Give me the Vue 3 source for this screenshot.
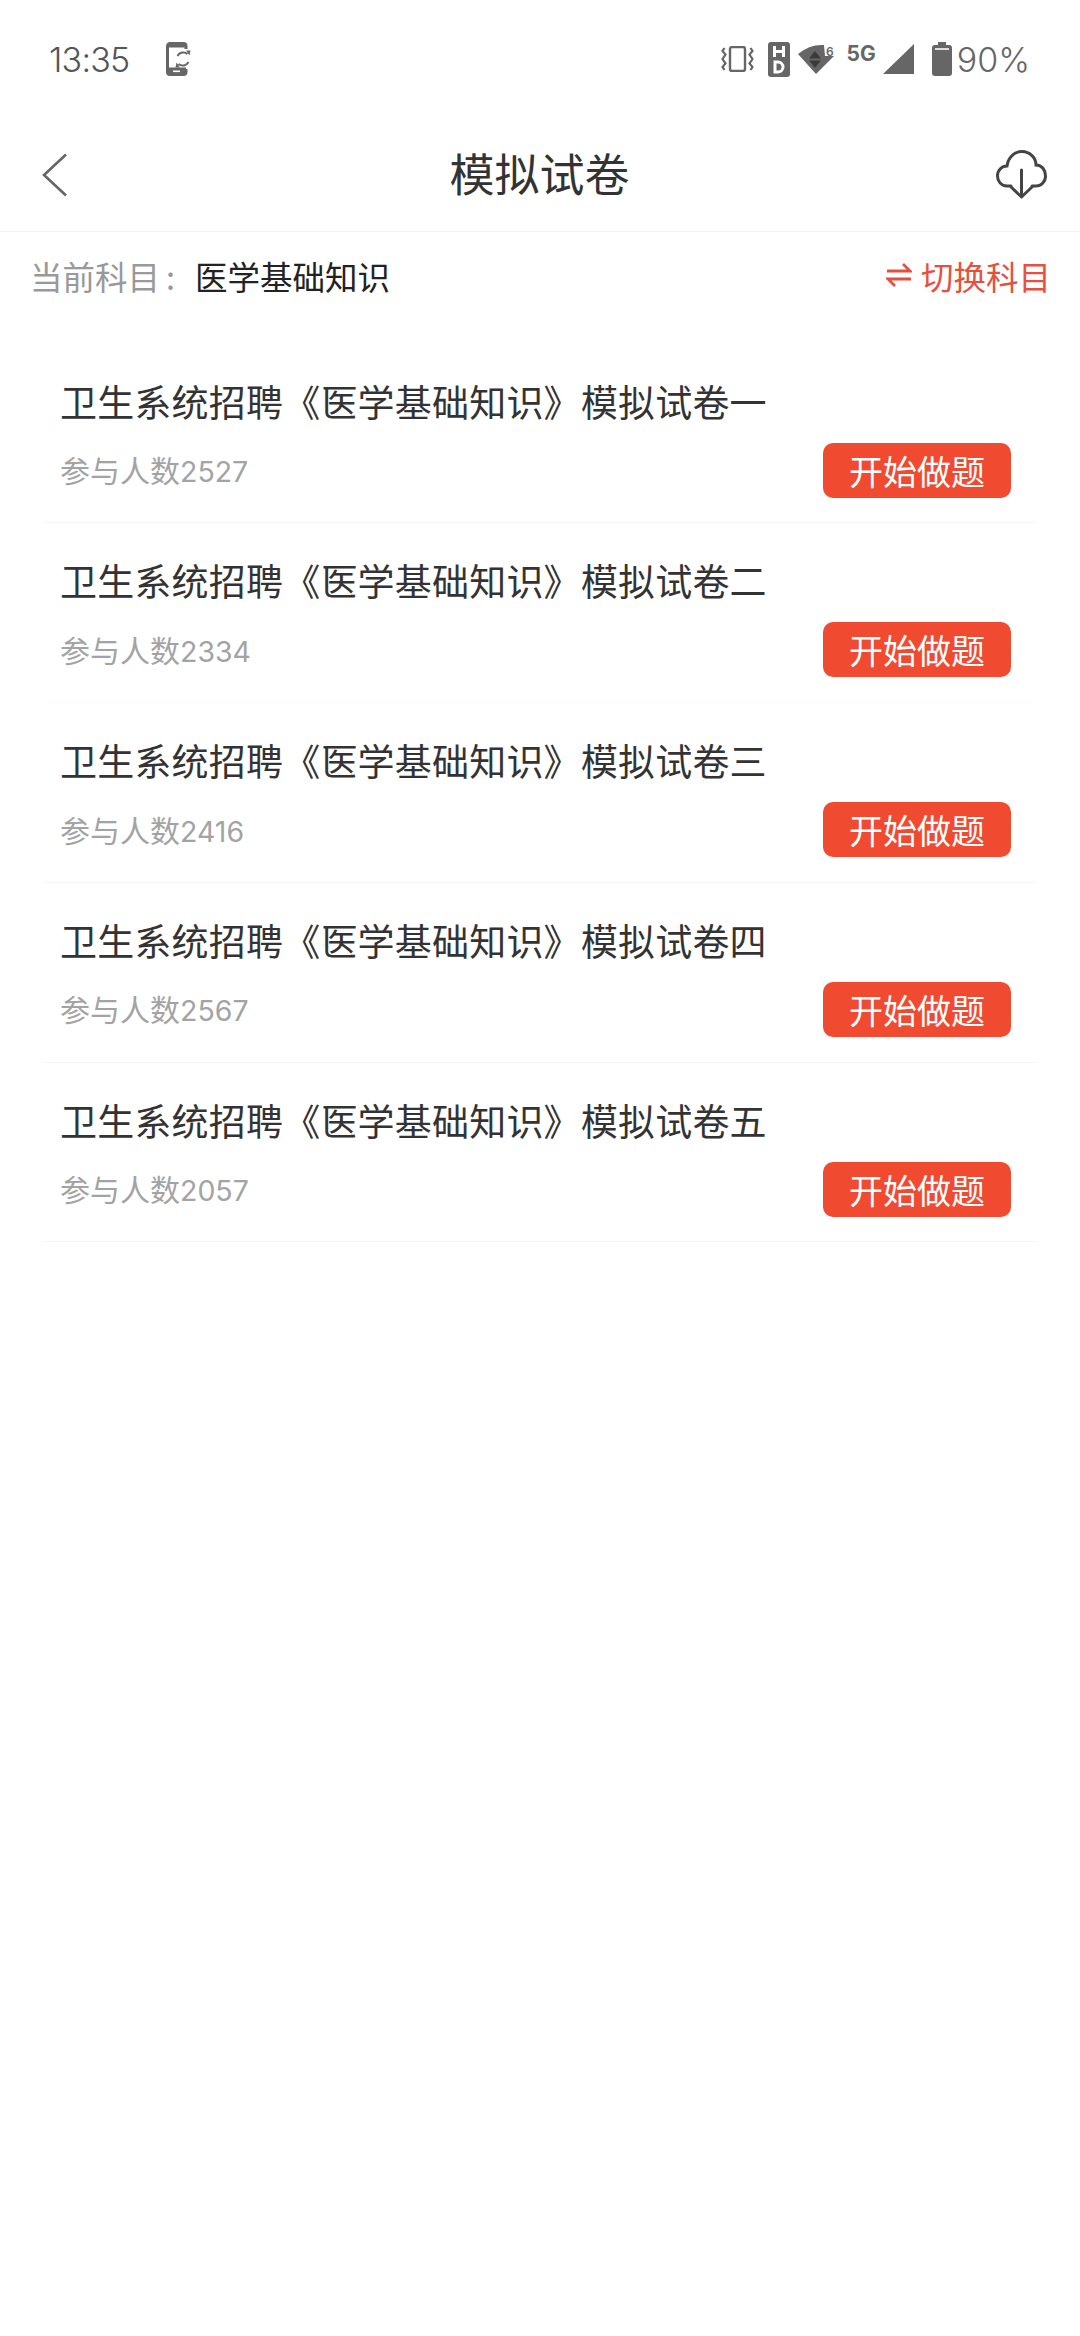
<template>
  <div class="page">
    <div class="status-bar">
      <div class="status-left">
        <span class="time">13:35</span>
        <svg class="sync-phone" width="27" height="34" viewBox="0 0 27 34">
          <path d="M20 7V4a2.500 2.500 0 0 0-2.500-2.500H4A2.500 2.500 0 0 0 1.500 4v26A2.500 2.500 0 0 0 4 32.500h13.500A2.500 2.500 0 0 0 20 30v-3" fill="none" stroke="#666" stroke-width="3" />
          <rect x="1.500" y="1.500" width="18.500" height="4" fill="#666" />
          <rect x="1.500" y="25.500" width="18.500" height="7" fill="#666" />
          <rect x="7" y="28.500" width="7" height="1.600" fill="#fff" />
          <path d="M11.500 14a6.500 6.500 0 0 1 10-2M22.500 20a6.500 6.500 0 0 1-10 2" fill="none" stroke="#666" stroke-width="2" />
          <path d="M20 8.500l4.500 0-1 5zM14 25.500l-4.500 0 1-5z" fill="#666" />
        </svg>
      </div>
      <div class="status-right">
        <svg class="vibrate" width="33" height="26" viewBox="0 0 33 26">
          <rect x="9" y="1" width="15" height="24" rx="2" fill="none" stroke="#666" stroke-width="2.400" />
          <path d="M3.500 2l-2 3 3 3.500-3 4.500 3 4.500-3 3.500 2 3M29.500 2l2 3-3 3.500 3 4.500-3 4.500 3 3.500-2 3" fill="none" stroke="#666" stroke-width="2.200" />
        </svg>
        <svg class="hd" width="22" height="35" viewBox="0 0 22 35">
          <rect width="22" height="35" rx="3" fill="#666" />
          <path d="M6.500 4v11M15.500 4v11M6.500 9.500h9" fill="none" stroke="#fff" stroke-width="3" />
          <path d="M7 20v10h3a5 5 0 0 0 0-10z" fill="none" stroke="#fff" stroke-width="3" />
        </svg>
        <svg class="wifi" width="40" height="30" viewBox="0 0 40 30">
          <path d="M0 10Q12 0 26 1L27 12H36L18 30z" fill="#666" />
          <path d="M17 7l6 7.500H11zM17 23.500l-6-7h12z" fill="#3a3a3a" />
          <text x="28" y="12" class="wifi-six">6</text>
        </svg>
        <span class="net">5G</span>
        <svg class="signal" width="31" height="30" viewBox="0 0 31 30">
          <path d="M31 0v30H0z" fill="#666" />
        </svg>
        <svg class="battery" width="20" height="34" viewBox="0 0 20 34">
          <path d="M6 0h8v3h3a3 3 0 0 1 3 3v25a3 3 0 0 1-3 3H3a3 3 0 0 1-3-3V6a3 3 0 0 1 3-3h3z" fill="#666" />
          <rect x="3" y="6" width="14" height="2" fill="#ddd" />
        </svg>
        <span class="battery-text">90%</span>
      </div>
    </div>

    <div class="nav-bar">
      <svg class="back" width="26" height="44" viewBox="0 0 26 44">
        <path d="M24 1.500L2 22l22 20.500" fill="none" stroke="#666" stroke-width="2.600" />
      </svg>
      <div class="nav-title">模拟试卷</div>
      <svg class="cloud" width="51" height="49" viewBox="0 0 51 49">
        <path d="M15 36H11C5 36 1.500 31 1.500 26C1.500 20 6 16 11 16C12 8 18 1.500 26 1.500C34 1.500 40 8 40 15C46 15 49.500 20 49.500 26C49.500 32 45 36 40 36H36" fill="none" stroke="#444" stroke-width="3" stroke-linecap="round" />
        <path d="M25.500 20v27M15 37l10.500 10L36 37" fill="none" stroke="#444" stroke-width="3" stroke-linecap="round" stroke-linejoin="round" />
      </svg>
    </div>

    <div class="subject-bar">
      <div class="subject">
        <span class="subject-label">当前科目<span class="colon">:</span></span>
        <span class="subject-name">医学基础知识</span>
      </div>
      <div class="switch">
        <svg width="26" height="24" viewBox="0 0 26 24">
          <path d="M1 8h23L17 1M25 16H2l7 7" fill="none" stroke="#e5513e" stroke-width="2.800" />
        </svg>
        <span>切换科目</span>
      </div>
    </div>

    <div class="list">
      <div v-for="paper in papers" :key="paper.title" class="paper">
        <div class="paper-title">{{ paper.title }}</div>
        <div class="paper-bottom">
          <span class="paper-count">参与人数<span class="paper-num">{{ paper.count }}</span></span>
          <span class="paper-btn">开始做题</span>
        </div>
      </div>
    </div>
  </div>
</template>

<script setup>
const prefix = '卫生系统招聘《医学基础知识》模拟试卷'
const papers = [
  { title: prefix + '一', count: 2527 },
  { title: prefix + '二', count: 2334 },
  { title: prefix + '三', count: 2416 },
  { title: prefix + '四', count: 2567 },
  { title: prefix + '五', count: 2057 }
]
</script>

<style>
html,
body {
  background: #fff;
}
</style>

<style scoped>
.page {
  width: 1080px;
  min-height: 2336px;
  background: #fff;
  font-family: "Noto Sans CJK SC", sans-serif;
  color: #333;
}

.status-bar {
  height: 118px;
  padding: 0 50px 0 49px;
  box-sizing: border-box;
  display: flex;
  justify-content: space-between;
  align-items: center;
}

.status-left,
.status-right {
  display: flex;
  align-items: center;
}

.time {
  font-family: Inter, sans-serif;
  font-size: 34px;
  font-weight: 300;
  letter-spacing: -0.8px;
  color: #555;
  margin-right: 37px;
}

.status-right .hd {
  margin-left: 14px;
}

.status-right .wifi {
  margin-left: 8px;
  margin-right: -4px;
}

.status-right .signal {
  margin-left: 7px;
}

.status-right .battery {
  margin-left: 18px;
}

.wifi-six {
  font-family: Inter, sans-serif;
  font-size: 12px;
  font-weight: 600;
  fill: #666;
}

.net {
  font-family: Inter, sans-serif;
  font-size: 21px;
  font-weight: 700;
  color: #666;
  margin: 0 0 12px 13px;
}

.battery-text {
  font-family: Inter, sans-serif;
  font-size: 34px;
  font-weight: 300;
  color: #666;
  margin-left: 5px;
}

.nav-bar {
  height: 113px;
  padding: 0 33px 0 42px;
  display: grid;
  grid-template-columns: 1fr auto 1fr;
  align-items: center;
  border-bottom: 1px solid #f3f3f3;
}

.nav-title {
  font-size: 45px;
  line-height: 60px;
  padding: 0 10px 3px 0;
  color: #333;
}

.cloud {
  justify-self: end;
}

.subject-bar {
  display: flex;
  justify-content: space-between;
  align-items: center;
  height: 86px;
  padding: 0 29px 0 30px;
}

.subject {
  font-size: 32.5px;
}

.subject-label {
  color: #999;
}

.colon {
  margin: 0 20px 0 6px;
}

.subject-name {
  color: #222;
}

.switch {
  display: flex;
  align-items: center;
  gap: 9px;
  font-size: 32.5px;
  color: #e5513e;
}

.list {
  margin: 0 45px;
  padding-top: 25.5px;
}

.paper {
  height: 179.8px;
  box-sizing: border-box;
  padding: 0 24px 0 15px;
  border-bottom: 1px solid #f5f5f5;
  display: flex;
  flex-direction: column;
}

.paper:nth-child(2) {
  border-bottom-color: #fbfbfb;
}

.paper-title {
  font-family: "Noto Sans CJK TC", sans-serif;
  font-size: 37px;
  letter-spacing: 0.2px;
  line-height: 44px;
  margin-top: 35px;
}

.paper-bottom {
  display: flex;
  justify-content: space-between;
  align-items: center;
  margin-top: 20px;
}

.paper-count {
  font-size: 30px;
  color: #a3a3a3;
  padding-bottom: 2px;
}

.paper-num {
  font-family: Inter, sans-serif;
  font-size: 28.5px;
  font-weight: 400;
}

.paper-btn {
  width: 188px;
  height: 55px;
  border-radius: 10px;
  background: #f04a30;
  color: #fff;
  font-size: 34px;
  display: flex;
  align-items: center;
  justify-content: center;
}
</style>
